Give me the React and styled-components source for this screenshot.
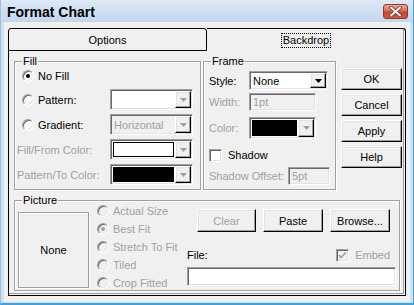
import React from 'react';
import styled, { createGlobalStyle, css } from 'styled-components';

const FACE = '#f0f0f0';
const SHADOW = '#a0a0a0';
const DARK = '#696969';
const LIGHT = '#e3e3e3';
const DISABLED = '#a0a0a0';
const FRAME = '#cfe0f3';

const GlobalStyle = createGlobalStyle`
  html, body { margin: 0; padding: 0; background: #ffffff; }
  body { font-family: "Liberation Sans", Arial, sans-serif; font-size: 11px; color: #000; }
  *, *::before, *::after { box-sizing: border-box; }
`;

const sunken = css`
  border: 1px solid;
  border-color: ${SHADOW} #fff #fff ${SHADOW};
  box-shadow: inset 1px 1px 0 ${DARK}, inset -1px -1px 0 ${LIGHT};
`;

const raised = css`
  border: 1px solid;
  border-color: #fff #000 #000 #fff;
  box-shadow: inset -1px -1px 0 ${SHADOW}, inset 1px 1px 0 ${LIGHT};
`;

const Window = styled.div`
  width: 414px;
  height: 305px;
  display: flex;
  flex-direction: column;
  border-left: 1px solid #9fbde0;
  border-right: 1px solid #3aa3e0;
  border-bottom: 2px solid #3aa3e0;
  background: ${FRAME};
`;

const TitleBar = styled.div`
  height: 22px;
  flex: none;
  display: flex;
  align-items: center;
  padding: 0 5px 0 6px;
  background: linear-gradient(#dde9f6, #c2d6ed);
`;

const Title = styled.div`
  flex: 1;
  font-size: 14px;
  font-weight: bold;
  color: #000;
  padding-top: 1px;
`;

const CloseButton = styled.div`
  width: 25px;
  height: 15px;
  border: 1px solid #8e3a2c;
  border-radius: 3px;
  background: linear-gradient(#eaa99b, #d86a55 45%, #c8472f 55%, #d45a43);
  display: flex;
  align-items: center;
  justify-content: center;
`;

const Client = styled.div`
  flex: 1;
  display: flex;
  flex-direction: column;
  background: ${FACE};
  border-left: 3px solid ${FRAME};
  border-right: 3px solid ${FRAME};
  border-bottom: 1px solid ${FRAME};
  padding: 6px 4px 6px 4px;
`;

const TabStrip = styled.div`
  display: flex;
  height: 23px;
  flex: none;
`;

const Tab = styled.div`
  display: flex;
  align-items: center;
  justify-content: center;
  ${(p) =>
    p.$active
      ? css`
          flex: 1;
          border-top: 1px solid #000;
          border-right: 1px solid #000;
          border-top-right-radius: 3px;
          box-shadow: inset -1px 0 0 ${FACE}, inset -2px 0 0 ${SHADOW};
          padding-top: 1px;
        `
      : css`
          width: 199px;
          border: 1px solid #000;
          border-radius: 3px 3px 0 0;
          padding-top: 1px;
        `}
`;

const FocusLabel = styled.span`
  border: 1px dotted #000;
  padding: 0 1px;
  line-height: 13px;
`;

const Panel = styled.div`
  flex: 1;
  display: flex;
  flex-direction: column;
  border: 1px solid #000;
  border-top: 0;
  box-shadow: inset -1px -1px 0 ${FACE}, inset -2px -2px 0 ${SHADOW};
  padding: 10px 3px 4px 5px;
`;

const TopRow = styled.div`
  display: flex;
  align-items: flex-start;
  gap: 2px;
`;

const Group = styled.div`
  position: relative;
  flex: none;
  width: ${(p) => p.$w}px;
  height: ${(p) => p.$h}px;
  border: 1px solid ${SHADOW};
  box-shadow: inset 1px 1px 0 #fff, 1px 1px 0 #fff;
  margin-top: ${(p) => p.$mt || 0}px;
`;

const Caption = styled.span`
  position: absolute;
  top: -7px;
  left: 7px;
  padding: 0 1px;
  line-height: 13px;
  background: ${FACE};
`;

const FillBody = styled.div`
  display: grid;
  grid-template-columns: 93px 83px;
  grid-template-rows: 18px repeat(4, 21px);
  row-gap: 4px;
  align-items: center;
  padding: 5px 0 0 2px;
`;

const Label = styled.span`
  color: ${(p) => (p.$disabled ? DISABLED : '#000')};
  white-space: nowrap;
  width: ${(p) => (p.$w ? `${p.$w}px` : 'auto')};
  flex: none;
`;

const RadioItem = styled.label`
  display: flex;
  align-items: center;
  gap: 4px;
  height: ${(p) => p.$h || 18}px;
  margin-left: ${(p) => p.$ml || 0}px;
  color: ${(p) => (p.$disabled ? DISABLED : '#000')};
  white-space: nowrap;
`;

const RadioCircle = styled.span`
  position: relative;
  width: 12px;
  height: 12px;
  flex: none;
  border-radius: 50%;
  border: 1px solid;
  border-color: ${SHADOW} #fff #fff ${SHADOW};
  box-shadow: inset 1px 1px 0 ${DARK}, inset -1px -1px 0 ${LIGHT};
  background: ${(p) => (p.$disabled ? FACE : '#fff')};
  &::after {
    content: '';
    display: ${(p) => (p.$checked ? 'block' : 'none')};
    position: absolute;
    left: 3px;
    top: 3px;
    width: 4px;
    height: 4px;
    border-radius: 50%;
    background: ${(p) => (p.$disabled ? DISABLED : '#000')};
  }
`;

const Combo = styled.div`
  display: flex;
  width: ${(p) => (p.$w ? `${p.$w}px` : '100%')};
  height: ${(p) => p.$h || 21}px;
  ${sunken};
  padding: 1px;
  flex: none;
`;

const ComboValue = styled.div`
  flex: 1;
  display: flex;
  align-items: center;
  padding-left: ${(p) => (p.$swatch ? 0 : 2)}px;
  background: ${(p) => (p.$disabled ? FACE : '#fff')};
  color: ${(p) => (p.$disabled ? DISABLED : '#000')};
`;

const Swatch = styled.div`
  align-self: stretch;
  flex: 1;
  margin: 1px;
  border: 1px solid ${(p) => p.$border || '#000'};
  background: ${(p) => p.$color};
`;

const DropBtn = styled.div`
  width: 16px;
  flex: none;
  display: flex;
  align-items: center;
  justify-content: center;
  background: ${FACE};
  ${raised};
`;

const Arrow = ({ disabled }) => (
  <svg width="7" height="4" viewBox="0 0 7 4">
    <polygon points="0,0 7,0 3.5,4" fill={disabled ? DISABLED : '#000'} />
  </svg>
);

const TextBox = styled.div`
  width: ${(p) => (p.$w ? `${p.$w}px` : '100%')};
  height: ${(p) => p.$h || 18}px;
  flex: none;
  ${sunken};
  background: ${(p) => (p.$disabled ? FACE : '#fff')};
  color: ${(p) => (p.$disabled ? DISABLED : '#000')};
  display: flex;
  align-items: center;
  padding-left: 3px;
  margin-left: ${(p) => (p.$right ? 'auto' : '0')};
`;

const FrameBody = styled.div`
  display: flex;
  flex-direction: column;
  padding: 9px 5px 0 5px;
`;

const FormRow = styled.div`
  display: flex;
  align-items: center;
  height: ${(p) => p.$h}px;
  margin-top: ${(p) => p.$mt || 0}px;
`;

const CheckBox = styled.span`
  width: 13px;
  height: 13px;
  flex: none;
  ${sunken};
  background: ${(p) => (p.$disabled ? FACE : '#fff')};
  display: flex;
  align-items: center;
  justify-content: center;
`;

const CheckItem = styled.label`
  display: flex;
  align-items: center;
  gap: 6px;
  color: ${(p) => (p.$disabled ? DISABLED : '#000')};
`;

const ButtonCol = styled.div`
  display: flex;
  flex-direction: column;
  gap: 4px;
  margin: 7px 0 0 3px;
`;

const PushButton = styled.button`
  width: ${(p) => p.$w || 61}px;
  height: ${(p) => p.$h || 22}px;
  padding: 0;
  font-family: "Liberation Sans", Arial, sans-serif;
  font-size: 11px;
  color: ${(p) => (p.$disabled ? DISABLED : '#000')};
  background: ${FACE};
  ${raised};
`;

const PictureBody = styled.div`
  display: flex;
  align-items: flex-start;
`;

const Preview = styled.div`
  width: 71px;
  height: 76px;
  margin: 11px 0 0 3px;
  border: 1px solid ${SHADOW};
  box-shadow: inset 1px 1px 0 #fff, 1px 1px 0 #fff;
  display: flex;
  align-items: center;
  justify-content: center;
`;

const PicRadios = styled.div`
  width: 90px;
  margin-left: 8px;
  padding-top: 1px;
  display: flex;
  flex-direction: column;
`;

const PicRight = styled.div`
  width: 209px;
  padding-top: 8px;
  display: flex;
  flex-direction: column;
`;

const PicButtons = styled.div`
  display: flex;
  gap: 7px;
  padding-left: 10px;
`;

const FileRow = styled.div`
  display: flex;
  align-items: center;
  justify-content: space-between;
  height: 14px;
  margin-top: 16px;
  padding-right: 6px;
`;

const FileInput = styled.div`
  height: 19px;
  margin-top: 5px;
  ${sunken};
  background: #fff;
`;

const CloseIcon = () => (
  <svg width="13" height="11" viewBox="0 0 13 11">
    <path d="M2 1.5 L11 9.5 M11 1.5 L2 9.5" stroke="#7a2a1e" strokeWidth="3.6" strokeLinecap="round" />
    <path d="M2 1.5 L11 9.5 M11 1.5 L2 9.5" stroke="#ffffff" strokeWidth="2" strokeLinecap="round" />
  </svg>
);

const CheckMark = ({ color }) => (
  <svg width="9" height="9" viewBox="0 0 9 9">
    <polyline points="1,4 3,6.5 8,1.5" fill="none" stroke={color} strokeWidth="1.6" />
  </svg>
);

const Radio = ({ children, checked, disabled, ml, h }) => (
  <RadioItem $disabled={disabled} $ml={ml} $h={h}>
    <RadioCircle $checked={checked} $disabled={disabled} />
    <span>{children}</span>
  </RadioItem>
);

export default function App() {
  return (
    <>
      <GlobalStyle />
      <Window>
        <TitleBar>
          <Title>Format Chart</Title>
          <CloseButton>
            <CloseIcon />
          </CloseButton>
        </TitleBar>
        <Client>
          <TabStrip>
            <Tab>Options</Tab>
            <Tab $active>
              <FocusLabel>Backdrop</FocusLabel>
            </Tab>
          </TabStrip>
          <Panel>
            <TopRow>
              <Group $w={187} $h={129}>
                <Caption>Fill</Caption>
                <FillBody>
                  <Radio checked ml={5}>No Fill</Radio>
                  <span />
                  <Radio ml={5}>Pattern:</Radio>
                  <Combo>
                    <ComboValue />
                    <DropBtn><Arrow disabled /></DropBtn>
                  </Combo>
                  <Radio ml={5}>Gradient:</Radio>
                  <Combo>
                    <ComboValue $disabled>Horizontal</ComboValue>
                    <DropBtn><Arrow disabled /></DropBtn>
                  </Combo>
                  <Label $disabled>Fill/From Color:</Label>
                  <Combo>
                    <ComboValue $swatch>
                      <Swatch $color="#fff" />
                    </ComboValue>
                    <DropBtn><Arrow disabled /></DropBtn>
                  </Combo>
                  <Label $disabled>Pattern/To Color:</Label>
                  <Combo>
                    <ComboValue $swatch>
                      <Swatch $color="#000" />
                    </ComboValue>
                    <DropBtn><Arrow disabled /></DropBtn>
                  </Combo>
                </FillBody>
              </Group>
              <Group $w={133} $h={129}>
                <Caption>Frame</Caption>
                <FrameBody>
                  <FormRow $h={19}>
                    <Label $w={40}>Style:</Label>
                    <Combo $w={79} $h={19}>
                      <ComboValue>None</ComboValue>
                      <DropBtn><Arrow /></DropBtn>
                    </Combo>
                  </FormRow>
                  <FormRow $h={18} $mt={3}>
                    <Label $w={40} $disabled>Width:</Label>
                    <TextBox $w={67} $disabled>1pt</TextBox>
                  </FormRow>
                  <FormRow $h={22} $mt={6}>
                    <Label $w={40} $disabled>Color:</Label>
                    <Combo $w={67} $h={22}>
                      <ComboValue $swatch>
                        <Swatch $color="#000" $border="#000" />
                      </ComboValue>
                      <DropBtn><Arrow disabled /></DropBtn>
                    </Combo>
                  </FormRow>
                  <FormRow $h={16} $mt={8}>
                    <CheckItem>
                      <CheckBox />
                      <span>Shadow</span>
                    </CheckItem>
                  </FormRow>
                  <FormRow $h={18} $mt={4}>
                    <Label $disabled>Shadow Offset:</Label>
                    <TextBox $w={42} $disabled $right>5pt</TextBox>
                  </FormRow>
                </FrameBody>
              </Group>
              <ButtonCol>
                <PushButton>OK</PushButton>
                <PushButton>Cancel</PushButton>
                <PushButton>Apply</PushButton>
                <PushButton>Help</PushButton>
              </ButtonCol>
            </TopRow>
            <Group $w={386} $h={91} $mt={10}>
              <Caption>Picture</Caption>
              <PictureBody>
                <Preview>None</Preview>
                <PicRadios>
                  <Radio disabled>Actual Size</Radio>
                  <Radio disabled checked>Best Fit</Radio>
                  <Radio disabled>Stretch To Fit</Radio>
                  <Radio disabled>Tiled</Radio>
                  <Radio disabled>Crop Fitted</Radio>
                </PicRadios>
                <PicRight>
                  <PicButtons>
                    <PushButton $w={59} $h={23} $disabled>Clear</PushButton>
                    <PushButton $w={60} $h={23}>Paste</PushButton>
                    <PushButton $w={60} $h={23}>Browse...</PushButton>
                  </PicButtons>
                  <FileRow>
                    <Label>File:</Label>
                    <CheckItem $disabled>
                      <CheckBox $disabled>
                        <CheckMark color={DISABLED} />
                      </CheckBox>
                      <span>Embed</span>
                    </CheckItem>
                  </FileRow>
                  <FileInput />
                </PicRight>
              </PictureBody>
            </Group>
          </Panel>
        </Client>
      </Window>
    </>
  );
}
